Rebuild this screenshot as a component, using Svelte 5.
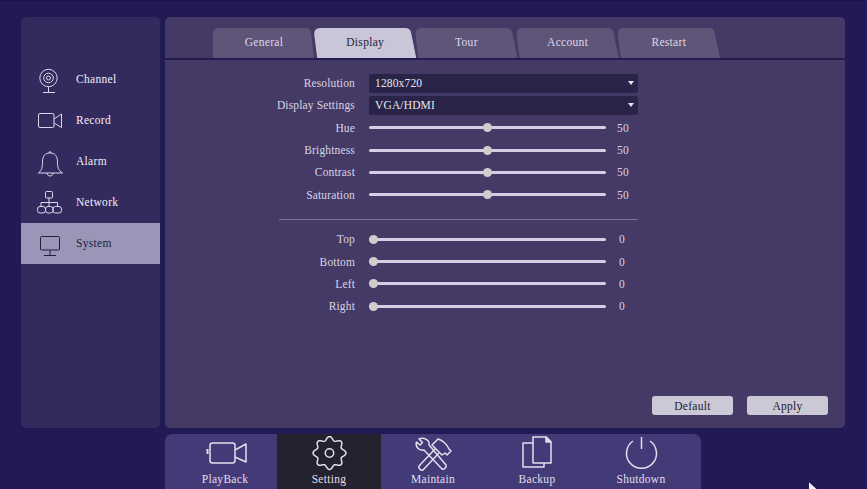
<script>
	const menu = ['Channel', 'Record', 'Alarm', 'Network', 'System'];
	const tabs = ['General', 'Display', 'Tour', 'Account', 'Restart'];
	const colour = ['Hue', 'Brightness', 'Contrast', 'Saturation'];
	const edges = ['Top', 'Bottom', 'Left', 'Right'];
	const dock = ['PlayBack', 'Setting', 'Maintain', 'Backup', 'Shutdown'];

	// eight soft lobes round the cog
	const gear = Array.from({ length: 97 }, (_, i) => {
		const a = (i / 96) * Math.PI * 2 + Math.PI / 8;
		const r = 14.6 + 1.9 * Math.cos(8 * a);
		return `${(22.5 + r * Math.cos(a)).toFixed(2)} ${(17 + r * Math.sin(a)).toFixed(2)}`;
	}).join('L');
</script>

{#snippet menuIcon(name)}
	<svg class="menu-icon" viewBox="0 0 30 30" fill="none" stroke="currentColor" stroke-width="1">
		{#if name === 'Channel'}
			<circle cx="13.5" cy="13" r="8.7" />
			<circle cx="13.5" cy="13" r="4.8" />
			<circle cx="13.5" cy="13" r="2" />
			<path d="M13.5 21.7V27.5M8 27.5H20" />
		{:else if name === 'Record'}
			<rect x="3.5" y="7.5" width="15.5" height="14" rx="1.5" />
			<path d="M19 13L26.5 8V21.5L19 17" />
		{:else if name === 'Alarm'}
			<path d="M3.5 26C7 23 7.5 20 7.5 15C7.5 9 10 6 15 6C20 6 22.5 9 22.5 15C22.5 20 23 23 27.5 26Z" />
			<path d="M12 26C12 30 18 30 18 26M14 6C14 4 16 4 16 6" />
		{:else if name === 'Network'}
			<rect x="10.5" y="3.5" width="7" height="6.5" rx="1" />
			<path d="M14 10V14.5M6 18.5V14.5H22.5V18.5M14 14.5V18.5" />
			<rect x="2.5" y="18.5" width="8" height="6.5" rx="2.5" />
			<rect x="10.5" y="18.5" width="7.5" height="6.5" rx="2.5" />
			<rect x="18" y="18.5" width="8.5" height="6.5" rx="2.5" />
		{:else}
			<rect x="5.5" y="7.5" width="19" height="13.5" rx="1" />
			<path d="M15 21V26M9 26.5H21" />
		{/if}
	</svg>
{/snippet}

{#snippet dockIcon(name)}
	<svg class="dock-icon" viewBox="0 0 44 36" fill="none" stroke="currentColor" stroke-width="1.5" stroke-linejoin="round">
		{#if name === 'PlayBack'}
			<rect x="7" y="7" width="25" height="20" rx="2.5" />
			<path d="M32 14L43 8V26L32 21" />
			<path d="M4.5 13V18" stroke-width="2" />
		{:else if name === 'Setting'}
			<path d={`M${gear}Z`} />
			<circle cx="22.5" cy="17" r="4.2" />
		{:else if name === 'Maintain'}
			<path d="M8 3L11.5 6.5L9 9L5.5 6C4 11 8 15 13 14L31 33C33 34 36 31 35 29L18 9C19 4 13 1 8 3Z" />
			<path d="M24 13L8 30C7 32 10 35 12 34L28 17" />
			<path d="M21 9L27 3C31 4 36 8 38 13L40 15L36 19L34 17L31 19Z" />
		{:else if name === 'Backup'}
			<path d="M18 7H8V31H29V27" />
			<path d="M18 1H31L36 6V27H18Z" />
			<path d="M31 1V6H36Z" fill="currentColor" />
		{:else}
			<path d="M22.5 1V13" />
			<path d="M14 5A15 15 0 1 0 31 5" />
		{/if}
	</svg>
{/snippet}

<div class="screen">
	<div class="top">
		<nav class="menu">
			{#each menu as item}
				<div class="menu-item" class:selected={item === 'System'}>
					{@render menuIcon(item)}
					<span>{item}</span>
				</div>
			{/each}
		</nav>

		<main class="panel">
			<div class="tabs">
				{#each tabs as tab}
					<div class="tab" class:active={tab === 'Display'} class:first={tab === 'General'}>{tab}</div>
				{/each}
			</div>

			<div class="form">
				<span class="label">Resolution</span>
				<div class="select">1280x720<i></i></div>
				<span class="label">Display Settings</span>
				<div class="select">VGA/HDMI<i></i></div>

				{#each colour as name}
					<span class="label">{name}</span>
					<div class="slider">
						<div class="track"><b style="left: 49.8%"></b></div>
						<span class="value">50</span>
					</div>
				{/each}

				<hr />

				{#each edges as name}
					<span class="label">{name}</span>
					<div class="slider">
						<div class="track"><b style="left: 1.7%"></b></div>
						<span class="value zero">0</span>
					</div>
				{/each}
			</div>

			<div class="actions">
				<button>Default</button>
				<button>Apply</button>
			</div>
		</main>
	</div>

	<div class="dock">
		{#each dock as item}
			<div class="dock-item" class:current={item === 'Setting'}>
				{@render dockIcon(item)}
				<span>{item}</span>
			</div>
		{/each}
	</div>
</div>

<svg class="cursor" viewBox="0 0 12 18"><path d="M0 0V15L4 11L7 17L9 16L6 10H11Z" /></svg>

<style>
	:global(body) {
		background: #221a54;
		overflow: hidden;
	}

	.screen {
		width: 867px;
		height: 489px;
		box-sizing: border-box;
		padding: 17px 22px 0 21px;
		font-family: 'Liberation Serif', serif;
		font-size: 11.5px;
		letter-spacing: 0.3px;
		color: #e2dfec;
		box-shadow: inset 0 1px 0 #19134a;
	}

	.top {
		display: flex;
		gap: 5px;
		height: 411px;
	}

	.menu {
		width: 139px;
		padding-top: 42px;
		background: #332b5e;
		border-radius: 5px;
	}

	.menu-item {
		display: flex;
		align-items: center;
		height: 41px;
		padding-left: 14px;
		gap: 11px;
		box-sizing: border-box;
		color: #f0eef6;
	}

	.menu-item span {
		margin-bottom: 2px;
	}

	.menu-item.selected {
		background: #9996b8;
		color: #211d3c;
	}

	.menu-icon {
		width: 30px;
		height: 30px;
		color: #dcd8ea;
	}

	.selected .menu-icon {
		color: #211d3c;
	}

	.panel {
		flex: 1;
		display: flex;
		flex-direction: column;
		background: #453a66;
		border-radius: 5px;
	}

	.tabs {
		display: flex;
		gap: 0;
		height: 30px;
		padding: 11px 0 0 48px;
		border-bottom: 2px solid #241c50;
	}

	.tab {
		flex: none;
		width: 102px;
		margin-right: -0.8px;
		height: 30px;
		line-height: 28px;
		text-align: center;
		background: #5f5578;
		color: #ddd9e8;
		clip-path: path('M3 30L0 6Q0 0 6 0H91Q96 0 97 5L102 30Z');
	}

	.tab.first {
		clip-path: path('M0 30V6Q0 0 6 0H93Q97 0 98 5L101 30Z');
	}

	.tab.active {
		background: #c9c6d8;
		color: #211d3c;
	}

	.form {
		display: grid;
		grid-template-columns: 190px 269px;
		grid-auto-rows: 22.3px;
		column-gap: 14px;
		align-items: center;
		margin-top: 12px;
		letter-spacing: 0.15px;
	}

	.label {
		text-align: right;
		color: #d8d4e4;
	}

	.select {
		position: relative;
		height: 19px;
		line-height: 18px;
		padding-left: 6px;
		background: #2a2548;
		border-radius: 2px;
		color: #e8e5f0;
	}

	.select i {
		position: absolute;
		right: 4px;
		top: 7px;
		border: 3px solid transparent;
		border-top: 4px solid #e8e5f0;
		border-bottom: 0;
	}

	.slider {
		display: flex;
		align-items: center;
	}

	.track {
		position: relative;
		width: 237px;
		height: 3px;
		background: #d5cfe6;
		border-radius: 2px;
	}

	.track b {
		position: absolute;
		top: -3px;
		width: 9px;
		height: 9px;
		margin-left: -4.5px;
		border-radius: 50%;
		background: #cfcdcd;
	}

	.value {
		margin-left: 11px;
		color: #d8d4e4;
	}

	.value.zero {
		margin-left: 13px;
	}

	hr {
		grid-column: 1 / -1;
		align-self: end;
		width: 359px;
		margin: 0 0 8px 114px;
		border: 0;
		border-top: 1px solid #7e7598;
	}

	.actions {
		display: flex;
		justify-content: flex-end;
		gap: 14px;
		margin-top: auto;
		padding: 0 17px 13px 0;
	}

	button {
		width: 81px;
		height: 19px;
		padding: 0;
		border: 0;
		border-radius: 3px;
		background: #ccc9d6;
		color: #1d1a2e;
		font: inherit;
		letter-spacing: inherit;
	}

	.dock {
		display: flex;
		width: 536px;
		height: 55px;
		box-sizing: border-box;
		margin: 6px 0 0 144px;
		padding: 0 8px;
		background: #433a78;
		border-radius: 7px 7px 0 0;
	}

	.dock-item {
		width: 104px;
		display: flex;
		flex-direction: column;
		align-items: center;
		color: #e2dfec;
	}

	.dock-item.current {
		background: #25222f;
	}

	.dock-icon {
		width: 44px;
		height: 36px;
		margin-top: 2px;
		flex: none;
	}

	.dock-item span {
		line-height: 14px;
	}

	.cursor {
		position: absolute;
		left: 809px;
		top: 482px;
		width: 9px;
		height: 14px;
		fill: #f4f2f8;
	}
</style>
